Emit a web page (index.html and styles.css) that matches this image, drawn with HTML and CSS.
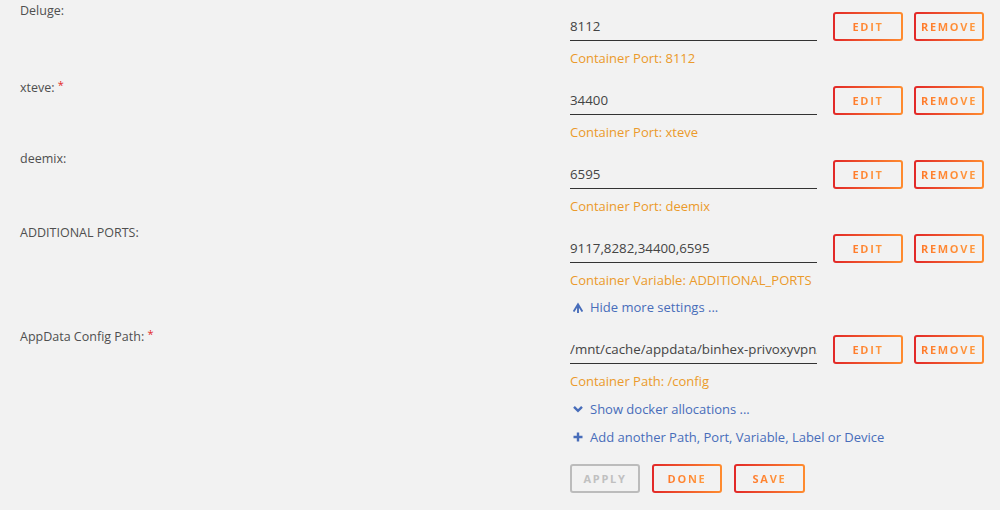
FILE: index.html
```html
<!DOCTYPE html>
<html lang="en">

<head>
  <meta charset="UTF-8">
  <meta name="viewport" content="width=device-width, initial-scale=1.0">
  <title>Update Container</title>
  <link rel="stylesheet" href="styles.css">
</head>

<body>
  <div class="settings">
    <div class="row">
      <div class="label">Deluge:</div>
      <div class="content">
        <div class="field">
          <input class="value" type="text" value="8112">
          <button class="btn"><span>Edit</span></button>
          <button class="btn"><span>Remove</span></button>
        </div>
        <div class="hint">Container Port: 8112</div>
      </div>
    </div>

    <div class="row">
      <div class="label">xteve: <span class="req">*</span></div>
      <div class="content">
        <div class="field">
          <input class="value" type="text" value="34400">
          <button class="btn"><span>Edit</span></button>
          <button class="btn"><span>Remove</span></button>
        </div>
        <div class="hint">Container Port: xteve</div>
      </div>
    </div>

    <div class="row">
      <div class="label">deemix:</div>
      <div class="content">
        <div class="field">
          <input class="value" type="text" value="6595">
          <button class="btn"><span>Edit</span></button>
          <button class="btn"><span>Remove</span></button>
        </div>
        <div class="hint">Container Port: deemix</div>
      </div>
    </div>

    <div class="row">
      <div class="label">ADDITIONAL PORTS:</div>
      <div class="content">
        <div class="field">
          <input class="value" type="text" value="9117,8282,34400,6595">
          <button class="btn"><span>Edit</span></button>
          <button class="btn"><span>Remove</span></button>
        </div>
        <div class="hint">Container Variable: ADDITIONAL_PORTS</div>
        <a href="#" class="link">
          <svg viewBox="0 0 10 11" width="10" height="11"><path d="M0.6 9.5 L5 2.4 L9.4 9.5 M5 2 V11" fill="none" stroke="currentColor" stroke-width="1.9"/></svg>
          Hide more settings ...
        </a>
      </div>
    </div>

    <div class="row">
      <div class="label">AppData Config Path: <span class="req">*</span></div>
      <div class="content">
        <div class="field">
          <input class="value" type="text" value="/mnt/cache/appdata/binhex-privoxyvpn/">
          <button class="btn"><span>Edit</span></button>
          <button class="btn"><span>Remove</span></button>
        </div>
        <div class="hint">Container Path: /config</div>
        <a href="#" class="link spaced">
          <svg viewBox="0 0 10 10" width="10" height="10"><path d="M1 2.8 L5 6.8 L9 2.8" fill="none" stroke="currentColor" stroke-width="2.4"/></svg>
          Show docker allocations ...
        </a>
        <a href="#" class="link spaced">
          <svg viewBox="0 0 10 10" width="10" height="10"><path d="M5 0.5 V9.5 M0.5 5 H9.5" fill="none" stroke="currentColor" stroke-width="2.4"/></svg>
          Add another Path, Port, Variable, Label or Device
        </a>
        <div class="actions">
          <button class="btn disabled"><span>Apply</span></button>
          <button class="btn"><span>Done</span></button>
          <button class="btn save"><span>Save</span></button>
        </div>
      </div>
    </div>
  </div>
</body>

</html>
```

FILE: styles.css
```css
body,
html {
  margin: 0;
  padding: 0;
  background: #f2f2f2;
  font-family: 'Open Sans', Arial, sans-serif;
  color: #4f4f4f;
}

.settings {
  padding: 3px 0 0 20px;
}

.row {
  display: grid;
  grid-template-columns: 550px 1fr;
  margin-bottom: 10px;
}

.label {
  font-size: 12.5px;
  line-height: 16px;
}

.req {
  color: #e22828;
  font-size: 11px;
  vertical-align: 3px;
}

.content {
  padding-top: 8px;
}

.field {
  display: flex;
  align-items: center;
  height: 30px;
}

.value {
  width: 247px;
  height: 30px;
  box-sizing: border-box;
  padding: 0;
  border: none;
  border-bottom: 1px solid #333;
  background: transparent;
  font-family: 'Open Sans', Arial, sans-serif;
  font-size: 13.3px;
  color: #444;
  outline: none;
  margin-right: 16px;
}

.btn {
  width: 70px;
  height: 29px;
  margin: 0 11px 0 0;
  padding: 0;
  border: 2px solid transparent;
  border-radius: 3px;
  background: linear-gradient(#f2f2f2, #f2f2f2) padding-box,
              linear-gradient(90deg, #e22828, #ff8c2f) border-box;
  cursor: pointer;
}

.btn span {
  font-family: 'Open Sans', Arial, sans-serif;
  font-size: 11px;
  font-weight: 700;
  letter-spacing: 1.7px;
  text-transform: uppercase;
  background: linear-gradient(90deg, #ff7a2a, #ff9a40);
  -webkit-background-clip: text;
  background-clip: text;
  color: transparent;
}

.btn.disabled {
  background: transparent;
  border-color: #bcbcbc;
}

.btn.disabled span {
  background: none;
  color: #c0c0c0;
}

.hint {
  margin-top: 8px;
  font-size: 13px;
  line-height: 18px;
  color: #eb9a2b;
}

.link {
  display: flex;
  align-items: center;
  gap: 7px;
  margin-top: 9px;
  font-size: 13px;
  line-height: 18px;
  color: #486dba;
  text-decoration: none;
  padding-left: 3px;
}

.link.spaced {
  margin-top: 10px;
}

.actions {
  display: flex;
  margin-top: 18px;
}

.actions .btn {
  margin-right: 12px;
}

.actions .save {
  width: 71px;
}
```
